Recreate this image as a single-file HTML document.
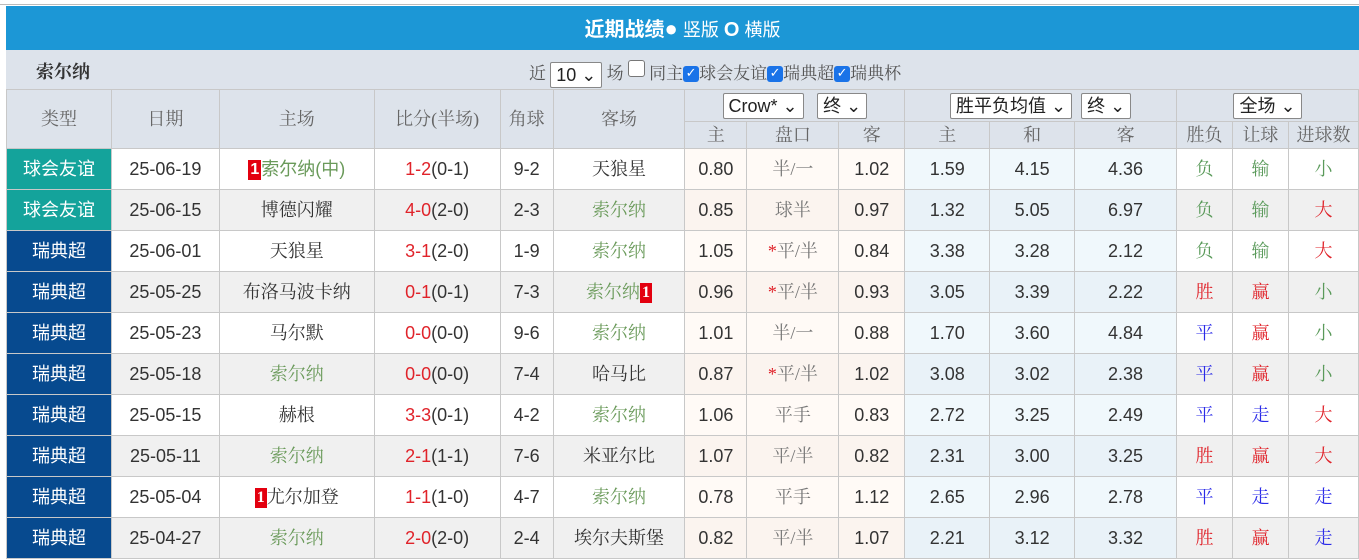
<!DOCTYPE html>
<html><head><meta charset="utf-8"><style>
body{margin:0;background:#fff;width:1359px;height:560px;overflow:hidden;font-family:"Liberation Sans","Noto Sans CJK SC",sans-serif;}
.top{position:absolute;left:0;top:0;width:1359px;height:4px;border-bottom:1px solid #bbb;background:#fff}
.hd{position:absolute;left:6px;top:6px;width:1353px;height:44px;background:#1c97d6;color:#fff;text-align:center;line-height:46px;font-size:18px}
.hd b{font-size:20px}
.hd span{font-size:18px}
.hd i{font-style:normal;font-size:22px}
.fl{position:absolute;left:6px;top:50px;width:1353px;height:39px;background:#dde3eb;font-size:17px;color:#555;line-height:20px}
.fl .t{position:absolute;left:30px;top:12px;font-weight:bold;color:#333;font-family:"Liberation Serif","Noto Serif CJK SC",serif;font-size:18px}
.fl .m{position:absolute;left:523px;top:12px;font-family:"Liberation Serif","Noto Serif CJK SC",serif}
.sel{display:inline-block;border:1px solid #888;border-radius:2px;background:#fff;color:#222;padding:0 5px;height:24px;line-height:24px;vertical-align:middle;font-size:18px;font-family:"Liberation Sans","Noto Sans CJK SC",sans-serif}
.cb{display:inline-block;width:16px;height:16px;border-radius:3px;background:#1a73e8;color:#fff;font-size:13px;line-height:16px;text-align:center;vertical-align:-1px;font-weight:bold;font-family:"DejaVu Sans",sans-serif;position:relative;top:-3px}
.cbo{display:inline-block;width:15px;height:15px;border:1px solid #777;border-radius:3px;background:#fff;vertical-align:-1px;position:relative;top:-3px}
table{position:absolute;left:6px;top:89px;border-collapse:collapse;table-layout:fixed;font-size:18px}
td{border:1px solid #c8c8c8;text-align:center;padding:0;color:#333;white-space:nowrap;overflow:hidden;line-height:22px;vertical-align:middle}
.h td{background:#dde3eb;color:#666;font-family:"Liberation Serif","Noto Serif CJK SC",serif}
.r td{height:40px}
.ty1{background:#14a39b!important;color:#fff!important}
.ty2{background:#074a8f!important;color:#fff!important}
.g td{background:#f0f0f0}
.g td.c{background:#fbf4ef}.g td.e{background:#e9f2f8}
td.c{background:#fffaf6}td.e{background:#f0f8fc}
.gr{color:#6a9a5a}.rd{color:#e0232a}.bl{color:#2b2be8}
.gn{color:#5a9a5a}
.one{background:#e3000f;color:#fff;font-weight:bold;font-size:16px;padding:0 2px;display:inline-block;line-height:20px;vertical-align:1px}
.cn{font-family:"Liberation Serif","Noto Serif CJK SC",serif}
</style></head><body>
<div class="top"></div>
<div class="hd"><b>近期战绩</b><i>●</i> <span>竖版</span> <b>O</b> <span>横版</span></div>
<div class="fl"><div class="t">索尔纳</div>
<div class="m">近 <span class="sel">10 ⌄</span> 场 <span class="cbo"></span> 同主<span class="cb">✓</span>球会友谊<span class="cb">✓</span>瑞典超<span class="cb">✓</span>瑞典杯</div></div>
<table>
<colgroup><col style="width:105px"><col style="width:108px"><col style="width:155px"><col style="width:126px"><col style="width:53px"><col style="width:132px"><col style="width:62px"><col style="width:92px"><col style="width:66px"><col style="width:85px"><col style="width:85px"><col style="width:102px"><col style="width:56px"><col style="width:56px"><col style="width:70px"></colgroup>
<tr class="h"><td rowspan="2" style="height:58px">类型</td><td rowspan="2">日期</td><td rowspan="2">主场</td><td rowspan="2">比分(半场)</td><td rowspan="2">角球</td><td rowspan="2">客场</td>
<td colspan="3" style="height:31px"><span class="sel">Crow* ⌄</span>&nbsp;&nbsp; <span class="sel">终 ⌄</span></td><td colspan="3"><span class="sel">胜平负均值 ⌄</span>&nbsp; <span class="sel">终 ⌄</span></td><td colspan="3"><span class="sel">全场 ⌄</span></td></tr>
<tr class="h"><td style="height:26px">主</td><td>盘口</td><td>客</td><td>主</td><td>和</td><td>客</td><td>胜负</td><td>让球</td><td>进球数</td></tr>

<tr class="r"><td class="ty1">球会友谊</td><td>25-06-19</td><td><span class="one">1</span><span class="gr">索尔纳(中)</span></td><td><span class="rd">1-2</span>(0-1)</td><td>9-2</td><td class="cn">天狼星</td><td class="c">0.80</td><td class="c cn" style="color:#777">半/一</td><td class="c">1.02</td><td class="e">1.59</td><td class="e">4.15</td><td class="e">4.36</td><td class="gn cn">负</td><td class="gn cn">输</td><td class="gn cn">小</td></tr>
<tr class="r g"><td class="ty1">球会友谊</td><td>25-06-15</td><td class="cn">博德闪耀</td><td><span class="rd">4-0</span>(2-0)</td><td>2-3</td><td class="gr cn">索尔纳</td><td class="c">0.85</td><td class="c cn" style="color:#777">球半</td><td class="c">0.97</td><td class="e">1.32</td><td class="e">5.05</td><td class="e">6.97</td><td class="gn cn">负</td><td class="gn cn">输</td><td class="rd cn">大</td></tr>
<tr class="r"><td class="ty2">瑞典超</td><td>25-06-01</td><td class="cn">天狼星</td><td><span class="rd">3-1</span>(2-0)</td><td>1-9</td><td class="gr cn">索尔纳</td><td class="c">1.05</td><td class="c cn" style="color:#777"><span class="rd">*</span>平/半</td><td class="c">0.84</td><td class="e">3.38</td><td class="e">3.28</td><td class="e">2.12</td><td class="gn cn">负</td><td class="gn cn">输</td><td class="rd cn">大</td></tr>
<tr class="r g"><td class="ty2">瑞典超</td><td>25-05-25</td><td class="cn">布洛马波卡纳</td><td><span class="rd">0-1</span>(0-1)</td><td>7-3</td><td class="cn"><span class="gr">索尔纳</span><span class="one">1</span></td><td class="c">0.96</td><td class="c cn" style="color:#777"><span class="rd">*</span>平/半</td><td class="c">0.93</td><td class="e">3.05</td><td class="e">3.39</td><td class="e">2.22</td><td class="rd cn">胜</td><td class="rd cn">赢</td><td class="gn cn">小</td></tr>
<tr class="r"><td class="ty2">瑞典超</td><td>25-05-23</td><td class="cn">马尔默</td><td><span class="rd">0-0</span>(0-0)</td><td>9-6</td><td class="gr cn">索尔纳</td><td class="c">1.01</td><td class="c cn" style="color:#777">半/一</td><td class="c">0.88</td><td class="e">1.70</td><td class="e">3.60</td><td class="e">4.84</td><td class="bl cn">平</td><td class="rd cn">赢</td><td class="gn cn">小</td></tr>
<tr class="r g"><td class="ty2">瑞典超</td><td>25-05-18</td><td class="gr cn">索尔纳</td><td><span class="rd">0-0</span>(0-0)</td><td>7-4</td><td class="cn">哈马比</td><td class="c">0.87</td><td class="c cn" style="color:#777"><span class="rd">*</span>平/半</td><td class="c">1.02</td><td class="e">3.08</td><td class="e">3.02</td><td class="e">2.38</td><td class="bl cn">平</td><td class="rd cn">赢</td><td class="gn cn">小</td></tr>
<tr class="r"><td class="ty2">瑞典超</td><td>25-05-15</td><td class="cn">赫根</td><td><span class="rd">3-3</span>(0-1)</td><td>4-2</td><td class="gr cn">索尔纳</td><td class="c">1.06</td><td class="c cn" style="color:#777">平手</td><td class="c">0.83</td><td class="e">2.72</td><td class="e">3.25</td><td class="e">2.49</td><td class="bl cn">平</td><td class="bl cn">走</td><td class="rd cn">大</td></tr>
<tr class="r g"><td class="ty2">瑞典超</td><td>25-05-11</td><td class="gr cn">索尔纳</td><td><span class="rd">2-1</span>(1-1)</td><td>7-6</td><td class="cn">米亚尔比</td><td class="c">1.07</td><td class="c cn" style="color:#777">平/半</td><td class="c">0.82</td><td class="e">2.31</td><td class="e">3.00</td><td class="e">3.25</td><td class="rd cn">胜</td><td class="rd cn">赢</td><td class="rd cn">大</td></tr>
<tr class="r"><td class="ty2">瑞典超</td><td>25-05-04</td><td class="cn"><span class="one">1</span>尤尔加登</td><td><span class="rd">1-1</span>(1-0)</td><td>4-7</td><td class="gr cn">索尔纳</td><td class="c">0.78</td><td class="c cn" style="color:#777">平手</td><td class="c">1.12</td><td class="e">2.65</td><td class="e">2.96</td><td class="e">2.78</td><td class="bl cn">平</td><td class="bl cn">走</td><td class="bl cn">走</td></tr>
<tr class="r g"><td class="ty2">瑞典超</td><td>25-04-27</td><td class="gr cn">索尔纳</td><td><span class="rd">2-0</span>(2-0)</td><td>2-4</td><td class="cn">埃尔夫斯堡</td><td class="c">0.82</td><td class="c cn" style="color:#777">平/半</td><td class="c">1.07</td><td class="e">2.21</td><td class="e">3.12</td><td class="e">3.32</td><td class="rd cn">胜</td><td class="rd cn">赢</td><td class="bl cn">走</td></tr>
</table>
</body></html>
